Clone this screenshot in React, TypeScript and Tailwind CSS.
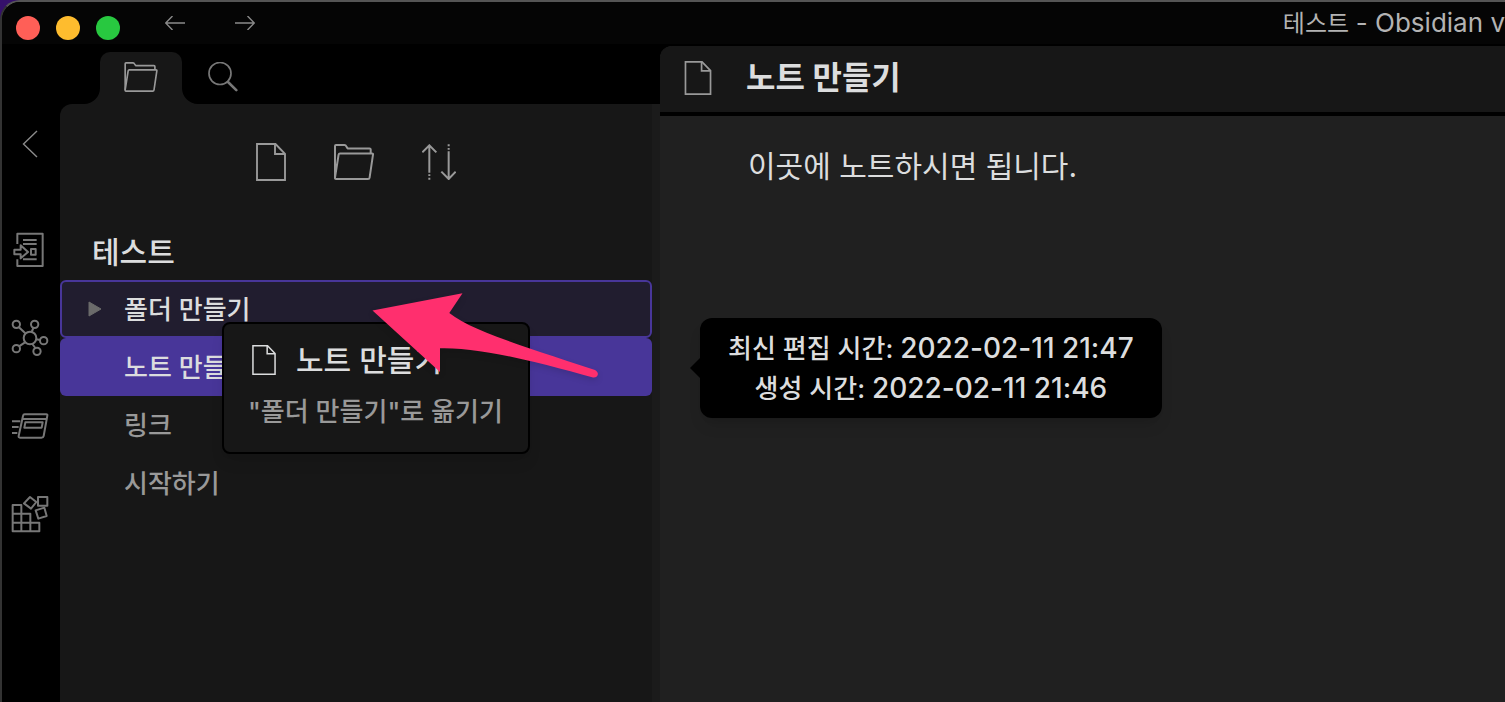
import type { ReactNode } from "react";

function FolderIcon({ className }: { className: string }) {
  return (
    <svg viewBox="0 0 40 36" className={className} fill="none" stroke="currentColor" strokeWidth="2" strokeLinejoin="round" aria-hidden="true">
      <path d="M1 33.5V2Q1 1 2 1H10.5Q11.7 1 12.2 2.2L13.6 4.4H35.5Q36.7 4.4 36.7 5.6V9" />
      <path d="M6 9.4H38Q39.2 9.4 39 10.6L35.6 33.6Q35.4 35 34 35H2Q.8 35 1 33.6L4.6 10.6Q4.8 9.4 6 9.4Z" />
    </svg>
  );
}

function FileIcon({ className }: { className: string }) {
  return (
    <svg viewBox="0 0 30 38" className={className} fill="none" stroke="currentColor" strokeWidth="1.9" aria-hidden="true">
      <path d="M1 1H19.5L29 10.8V37H1Z" />
      <path d="M19 1V11H29" />
    </svg>
  );
}

function SortIcon() {
  return (
    <svg viewBox="0 0 102 108" className="h-9 w-[34px]" fill="none" stroke="currentColor" strokeWidth="6" aria-hidden="true">
      <path d="M22 86V4M1 25L22 4L43 25" />
      <path d="M22 91V96M22 101V107" />
      <path d="M80 22V104M58 83L80 105L101 83" />
      <path d="M80 1V7M80 12V17" />
    </svg>
  );
}

function SearchIcon() {
  return (
    <svg viewBox="0 0 30 30" className="h-[30px] w-[30px]" fill="none" stroke="currentColor" strokeLinecap="round" aria-hidden="true">
      <circle cx="12" cy="11.5" r="11" strokeWidth="1.7" />
      <path d="M20 20L28.3 28.2" strokeWidth="2.6" />
    </svg>
  );
}

function RibbonIcon({ children }: { children: ReactNode }) {
  return (
    <svg viewBox="0 0 108 108" className="h-9 w-9 overflow-visible" fill="none" stroke="currentColor" strokeWidth="6" strokeLinejoin="round" aria-hidden="true">
      {children}
    </svg>
  );
}

const ribbonItems = [
  {
    label: "빠른 전환",
    icon: (
      <RibbonIcon>
        <path d="M16 36V5H92V102H16V82" />
        <path d="M7 53H26V40L48 60L26 79V67H7Z" />
        <path d="M33 24H74M33 36H74M33 82H74" />
        <rect x="57" y="51" width="14" height="17" />
      </RibbonIcon>
    ),
  },
  {
    label: "그래프 뷰",
    icon: (
      <RibbonIcon>
        <circle cx="13" cy="13" r="11" />
        <circle cx="68" cy="13" r="11" />
        <circle cx="95" cy="62" r="11" />
        <circle cx="13" cy="86" r="11" />
        <circle cx="75" cy="94" r="11" />
        <circle cx="54" cy="54" r="19" />
        <path d="M20 21L40 40M64 24L59 36M73 58L84 60M39 67L21 79M61 72L70 84" />
      </RibbonIcon>
    ),
  },
  {
    label: "카드",
    icon: (
      <RibbonIcon>
        <path d="M38 19H103Q107 19 106 23L95 84Q94 89 88 89H24Q19 89 20 84L33 24Q34 19 38 19Z" />
        <path d="M32 33H104" />
        <path d="M40 43H92L89 59H37Z" />
        <path d="M0 40H25M0 57H20M0 75H16" />
      </RibbonIcon>
    ),
  },
  {
    label: "플러그인",
    icon: (
      <RibbonIcon>
        <path d="M2 27H28V106H2ZM2 53H55V106M2 80H82V106H2" />
        <path d="M54 3L73 18L57 38L36 22Z" />
        <path d="M78 3H106V29H78Z" />
        <path d="M71 43L97 35L104 60L79 68Z" />
      </RibbonIcon>
    ),
  },
];

export default function App() {
  return (
    <div className="h-screen overflow-hidden bg-[#35106b] font-['Inter','Noto_Sans_CJK_KR',sans-serif] text-[#dcddde]">
      <div className="relative flex h-full flex-col overflow-hidden rounded-tl-[20px] border-t-2 border-l-2 border-t-[#555555] border-l-[#333333] bg-black">
        <header className="flex h-[42px] shrink-0 items-center bg-[#050505] text-[#8a8a8a]">
          <div className="flex gap-4 pt-2.5 pl-3.5">
            <button aria-label="닫기" className="h-6 w-6 rounded-full bg-[#ff5f57]" />
            <button aria-label="최소화" className="h-6 w-6 rounded-full bg-[#febc2e]" />
            <button aria-label="최대화" className="h-6 w-6 rounded-full bg-[#28c840]" />
          </div>
          <nav className="flex gap-[50px] pl-[45px]">
            <button aria-label="뒤로">
              <svg viewBox="0 0 20 14" className="h-3.5 w-5" fill="none" stroke="currentColor" strokeWidth="1.4">
                <path d="M20 7H1M7.5 0L.7 7L7.5 14" />
              </svg>
            </button>
            <button aria-label="앞으로">
              <svg viewBox="0 0 20 14" className="h-3.5 w-5" fill="none" stroke="currentColor" strokeWidth="1.4">
                <path d="M0 7H19M12.5 0L19.3 7L12.5 14" />
              </svg>
            </button>
          </nav>
          <div className="flex-1 text-right text-2xl whitespace-nowrap text-[#b3b3b3]">
            테스트 <span className="text-[26px]">- Obsidian v</span>
          </div>
        </header>

        <div className="flex min-h-0 flex-1">
          <nav className="flex w-[58px] shrink-0 flex-col items-center pt-[86px] pr-0.5 text-[#777777]">
            <button aria-label="사이드바 접기">
              <svg viewBox="0 0 16 28" className="h-7 w-4" fill="none" stroke="#8a8a8a" strokeWidth="1.4">
                <path d="M15 1L1.5 14L15 27" />
              </svg>
            </button>
            <div className="flex flex-col gap-[52px] pt-[74px]">
              {ribbonItems.map((item) => (
                <button key={item.label} aria-label={item.label}>
                  {item.icon}
                </button>
              ))}
            </div>
          </nav>

          <aside className="flex w-[600px] shrink-0 flex-col text-[#999999]">
            <div className="flex h-[60px] items-end pl-6">
              <svg viewBox="0 0 16 16" className="h-4 w-4 text-[#171717]" aria-hidden="true">
                <path d="M16 0V16H0A16 16 0 0 0 16 0Z" fill="currentColor" />
              </svg>
              <button aria-label="파일 탐색기" className="flex h-[52px] w-[82px] items-center justify-center rounded-t-[10px] bg-[#171717] pb-0.5">
                <FolderIcon className="h-[30px] w-[34px]" />
              </button>
              <svg viewBox="0 0 16 16" className="h-4 w-4 text-[#171717]" aria-hidden="true">
                <path d="M0 0V16H16A16 16 0 0 1 0 0Z" fill="currentColor" />
              </svg>
              <button aria-label="검색" className="flex h-[52px] items-center pb-0.5 pl-2.5 text-[#777777]">
                <SearchIcon />
              </button>
            </div>

            <div className="min-h-0 flex-1 rounded-tl-xl border-r-8 border-[#1b1b1b] bg-[#171717]">
              <div className="flex h-[116px] items-center justify-center gap-12">
                <button aria-label="새 노트">
                  <FileIcon className="h-[38px] w-[30px]" />
                </button>
                <button aria-label="새 폴더">
                  <FolderIcon className="h-9 w-10" />
                </button>
                <button aria-label="정렬 순서 변경">
                  <SortIcon />
                </button>
              </div>
              <h2 className="flex h-[60px] items-center px-8 pt-1 text-[30px] font-medium text-[#dcddde]">테스트</h2>
              <ul className="text-[26px]">
                <li className="flex h-[58px] items-center rounded-md border-2 border-[#483699] bg-[#211d2f] pl-[26px] font-medium text-[#dcddde]">
                  <svg viewBox="0 0 14 16" className="mr-[22px] h-4 w-3.5" aria-hidden="true">
                    <path d="M1 1L13 8L1 15Z" fill="#6b6b6b" stroke="#6b6b6b" strokeLinejoin="round" />
                  </svg>
                  폴더 만들기
                </li>
                <li className="flex h-[58px] items-center rounded-md bg-[#483699] pl-16 font-medium text-[#dcddde]">노트 만들기</li>
                <li className="flex h-[58px] items-center pl-16 font-medium">링크</li>
                <li className="flex h-[58px] items-center pl-16 font-medium">시작하기</li>
              </ul>
            </div>
          </aside>

          <main className="mt-0.5 flex min-w-0 flex-1 flex-col overflow-hidden rounded-tl-xl bg-[#202020]">
            <div className="flex h-[70px] shrink-0 items-center gap-[34px] border-b-4 border-black bg-[#171717] pb-0.5 pl-6">
              <FileIcon className="h-[34px] w-7 text-[#999999]" />
              <h1 className="text-[32px] font-bold">노트 만들기</h1>
            </div>
            <p className="px-[88px] pt-[25px] text-[30px] leading-[50px]">이곳에 노트하시면 됩니다.</p>
          </main>
        </div>

        <div className="absolute top-80 left-[220px] h-[132px] w-[308px] rounded-lg border-2 border-black bg-[#171717] px-6 pt-[11px] shadow-lg">
          <div className="flex h-[50px] items-center gap-5 pl-1 text-[30px] font-medium whitespace-nowrap">
            <FileIcon className="h-[30px] w-6 shrink-0" />
            노트 만들기
          </div>
          <div className="text-[26px] leading-[54px] font-medium whitespace-nowrap text-[#999999]">"폴더 만들기"로 옮기기</div>
        </div>

        <div role="tooltip" className="absolute top-[316px] left-[698px] rounded-xl bg-black px-7 py-2.5 text-center text-[26px] leading-10 font-medium whitespace-nowrap shadow-lg">
          <div className="h-10">
            최신 편집 시간: <span className="text-[28px]">2022-02-11 21:47</span>
          </div>
          <div className="h-10">
            생성 시간: <span className="text-[28px]">2022-02-11 21:46</span>
          </div>
          <svg viewBox="0 0 10 20" className="absolute top-10 -left-2.5 h-5 w-2.5" aria-hidden="true">
            <path d="M10 0L0 10L10 20Z" fill="#000" />
          </svg>
        </div>

        <svg viewBox="370 290 232 92" className="absolute top-[288px] left-[368px] h-[92px] w-[232px] drop-shadow-md" aria-hidden="true">
          <path d="M372.5 310.5L462.5 293.3L449.3 313C472 331 520 345 595 370C600 373 598 378 593 377.5C545 364 480 347 440 348.3V372Z" fill="#ff2f6e" />
        </svg>
      </div>
    </div>
  );
}
